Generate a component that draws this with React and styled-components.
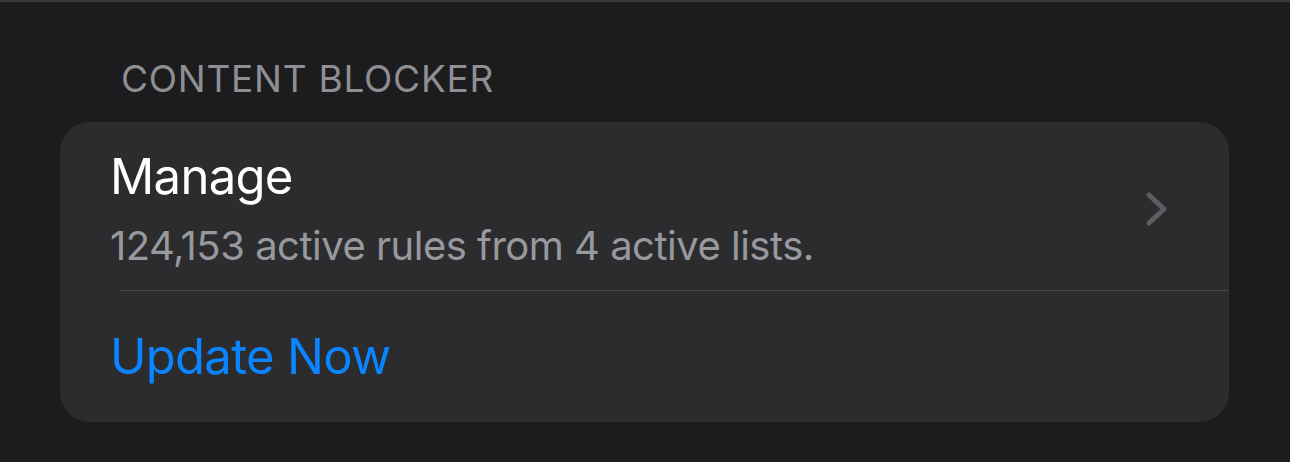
import React from "react";
import styled, { createGlobalStyle } from "styled-components";

const GlobalStyle = createGlobalStyle`
	html, body {
		margin: 0;
		padding: 0;
		background: #1c1c1e;
	}
	body {
		font-family: Inter, "Noto Sans", "Liberation Sans", sans-serif;
		-webkit-font-smoothing: antialiased;
	}
`;

const Page = styled.div`
	min-height: 462px;
	box-sizing: border-box;
	border-top: 2px solid #38383a;
	padding-top: 55px;
`;

const SectionHeader = styled.div`
	padding-left: 121px;
	font-size: 37px;
	line-height: 44px;
	color: #8e8e93;
	letter-spacing: 0.75px;
	margin-bottom: 21px;
`;

const Card = styled.div`
	margin: 0 61px 0 60px;
	background: #2c2c2e;
	border-radius: 30px;
	overflow: hidden;
`;

const Row = styled.div`
	display: flex;
	align-items: center;
	justify-content: space-between;
	padding: ${(p) => p.padding};
	padding-left: 50px;
`;

const Texts = styled.div`
	display: flex;
	flex-direction: column;
`;

const Title = styled.div`
	font-size: 49px;
	line-height: 58px;
	letter-spacing: -0.7px;
	color: ${(p) => p.color || "#ffffff"};
`;

const Subtitle = styled.div`
	margin-top: 16px;
	font-size: 40px;
	line-height: 48px;
	letter-spacing: -0.5px;
	color: #98989f;
`;

const Separator = styled.div`
	margin-left: 60px;
	height: 1px;
	background: #48484a;
`;

const Chevron = styled.svg`
	width: 24px;
	height: 36px;
	margin-right: 60px;
	flex-shrink: 0;
`;

function App() {
	return (
		<>
			<GlobalStyle />
			<Page>
				<SectionHeader>CONTENT BLOCKER</SectionHeader>
				<Card>
					<Row padding='26px 0 20px'>
						<Texts>
							<Title>Manage</Title>
							<Subtitle>124,153 active rules from 4 active lists.</Subtitle>
						</Texts>
						<Chevron viewBox='0 0 24 36'>
							<path
								d='M4 4 L19 18 L4 32'
								fill='none'
								stroke='#5e5e62'
								strokeWidth='5'
								strokeLinecap='round'
								strokeLinejoin='round'
							/>
						</Chevron>
					</Row>
					<Separator />
					<Row padding='37px 0 36px'>
						<Title color='#0a84ff'>Update Now</Title>
					</Row>
				</Card>
			</Page>
		</>
	);
}

export default App;
